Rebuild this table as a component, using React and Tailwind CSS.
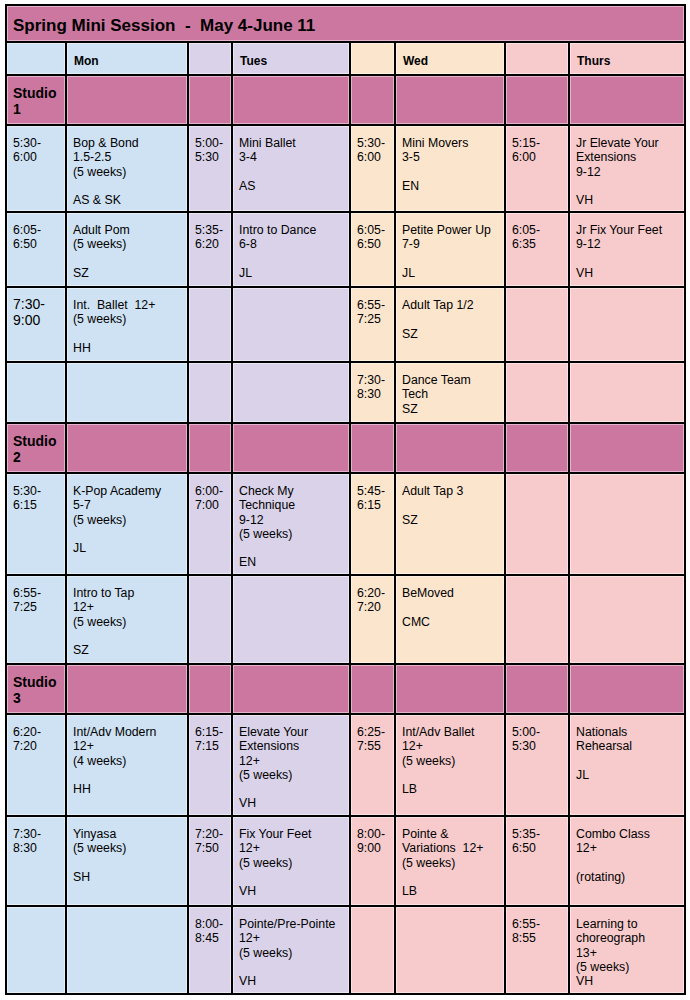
import { Fragment } from 'react';

const BLUE = 'bg-[#cfe2f3]';
const LAV = 'bg-[#d9d2e9]';
const PEACH = 'bg-[#fce5cd]';
const PINK = 'bg-[#f7cbcc]';
const MAG = 'bg-[#cc77a0]';

const baseCols = [BLUE, BLUE, LAV, LAV, PEACH, PEACH, PINK, PINK];
const studio3Cols = [BLUE, BLUE, LAV, LAV, PINK, PINK, PINK, PINK];

const studios = [
    {
        name: 'Studio\n1',
        cols: baseCols,
        rows: [
            ['5:30-\n6:00', 'Bop & Bond\n1.5-2.5\n(5 weeks)\n\nAS & SK', '5:00-\n5:30', 'Mini Ballet\n3-4\n\nAS', '5:30-\n6:00', 'Mini Movers\n3-5\n\nEN', '5:15-\n6:00', 'Jr Elevate Your\nExtensions\n9-12\n\nVH'],
            ['6:05-\n6:50', 'Adult Pom\n(5 weeks)\n\nSZ', '5:35-\n6:20', 'Intro to Dance\n6-8\n\nJL', '6:05-\n6:50', 'Petite Power Up\n7-9\n\nJL', '6:05-\n6:35', 'Jr Fix Your Feet\n9-12\n\nVH'],
            ['7:30-\n9:00', 'Int.  Ballet  12+\n(5 weeks)\n\nHH', '', '', '6:55-\n7:25', 'Adult Tap 1/2\n\nSZ', '', ''],
            ['', '', '', '', '7:30-\n8:30', 'Dance Team\nTech\nSZ', '', ''],
        ],
    },
    {
        name: 'Studio\n2',
        cols: baseCols,
        rows: [
            ['5:30-\n6:15', 'K-Pop Academy\n5-7\n(5 weeks)\n\nJL', '6:00-\n7:00', 'Check My\nTechnique\n9-12\n(5 weeks)\n\nEN', '5:45-\n6:15', 'Adult Tap 3\n\nSZ', '', ''],
            ['6:55-\n7:25', 'Intro to Tap\n12+\n(5 weeks)\n\nSZ', '', '', '6:20-\n7:20', 'BeMoved\n\nCMC', '', ''],
        ],
    },
    {
        name: 'Studio\n3',
        cols: studio3Cols,
        rows: [
            ['6:20-\n7:20', 'Int/Adv Modern\n12+\n(4 weeks)\n\nHH', '6:15-\n7:15', 'Elevate Your\nExtensions\n12+\n(5 weeks)\n\nVH', '6:25-\n7:55', 'Int/Adv Ballet\n12+\n(5 weeks)\n\nLB', '5:00-\n5:30', 'Nationals\nRehearsal\n\nJL'],
            ['7:30-\n8:30', 'Yinyasa\n(5 weeks)\n\nSH', '7:20-\n7:50', 'Fix Your Feet\n12+\n(5 weeks)\n\nVH', '8:00-\n9:00', 'Pointe &\nVariations  12+\n(5 weeks)\n\nLB', '5:35-\n6:50', 'Combo Class\n12+\n\n(rotating)'],
            ['', '', '8:00-\n8:45', 'Pointe/Pre-Pointe\n12+\n(5 weeks)\n\nVH', '', '', '6:55-\n8:55', 'Learning to\nchoreograph\n13+\n(5 weeks)\nVH'],
        ],
    },
];

const days = ['', 'Mon', '', 'Tues', '', 'Wed', '', 'Thurs'];

const cellEdge = 'shadow-[inset_0_0_0_1px_rgba(255,255,255,0.45)]';

export default function App() {
    return (
        <div className="min-h-[1000px] bg-white pt-[4px] pl-[5px] font-['Liberation_Sans',Arial,sans-serif] text-black">
            <div className="grid w-max gap-[2px] bg-black p-[2px] grid-cols-[58px_120px_42px_116px_43px_108px_62px_114px] grid-rows-[35px_31px_48px_85px_73px_73px_59px_48px_100px_87px_48px_100px_88px_86px]">
                <div className={`col-span-8 ${MAG} ${cellEdge} px-[6px] pt-[10px] text-[17px] font-bold leading-[19px] whitespace-pre`}>
                    Spring Mini Session  -  May 4-June 11
                </div>

                {days.map((d, i) => (
                    <div key={'d' + i} className={`${baseCols[i]} ${cellEdge} px-[7px] pt-[11px] text-[12px] font-bold leading-[14px]`}>
                        {d}
                    </div>
                ))}

                {studios.map((studio) => (
                    <Fragment key={studio.name}>
                        {baseCols.map((_, i) => (
                            <div key={'h' + i} className={`${MAG} ${cellEdge} px-[6px] pt-[9px] text-[14px] font-bold leading-[16px] whitespace-pre`}>
                                {i === 0 ? studio.name : ''}
                            </div>
                        ))}
                        {studio.rows.map((row, r) =>
                            row.map((text, i) => {
                                const big = text === '7:30-\n9:00';
                                return (
                                    <div
                                        key={r + '-' + i}
                                        className={`${studio.cols[i]} ${cellEdge} px-[6px] whitespace-pre ${big ? 'text-[14px] leading-[15.5px] pt-[9px]' : 'text-[12.3px] leading-[14.3px] pt-[10px]'}`}
                                    >
                                        {text}
                                    </div>
                                );
                            })
                        )}
                    </Fragment>
                ))}
            </div>
        </div>
    );
}
